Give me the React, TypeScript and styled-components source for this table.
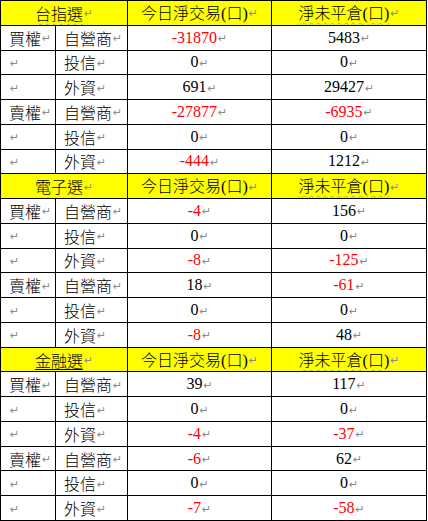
import React from 'react';
import styled, { createGlobalStyle, css } from 'styled-components';

type TRow = {
  side?: string;
  who: string;
  trade: number;
  open: number;
};

type TSection = {
  title: string;
  titleLine: 'wavy' | 'solid' | 'none';
  rows: TRow[];
};

const sections: TSection[] = [
  {
    title: '台指選',
    titleLine: 'wavy',
    rows: [
      { side: '買權', who: '自營商', trade: -31870, open: 5483 },
      { who: '投信', trade: 0, open: 0 },
      { who: '外資', trade: 691, open: 29427 },
      { side: '賣權', who: '自營商', trade: -27877, open: -6935 },
      { who: '投信', trade: 0, open: 0 },
      { who: '外資', trade: -444, open: 1212 },
    ],
  },
  {
    title: '電子選',
    titleLine: 'none',
    rows: [
      { side: '買權', who: '自營商', trade: -4, open: 156 },
      { who: '投信', trade: 0, open: 0 },
      { who: '外資', trade: -8, open: -125 },
      { side: '賣權', who: '自營商', trade: 18, open: -61 },
      { who: '投信', trade: 0, open: 0 },
      { who: '外資', trade: -8, open: 48 },
    ],
  },
  {
    title: '金融選',
    titleLine: 'solid',
    rows: [
      { side: '買權', who: '自營商', trade: 39, open: 117 },
      { who: '投信', trade: 0, open: 0 },
      { who: '外資', trade: -4, open: -37 },
      { side: '賣權', who: '自營商', trade: -6, open: 62 },
      { who: '投信', trade: 0, open: 0 },
      { who: '外資', trade: -7, open: -58 },
    ],
  },
];

const GlobalStyle = createGlobalStyle`
  html, body {
    margin: 0;
    padding: 0;
    background: #ffffff;
  }
  body {
    font-family: "Liberation Serif", "Noto Sans CJK TC", serif;
    font-size: 16px;
    color: #000000;
  }
`;

const Sheet = styled.div`
  width: 427px;
  height: 521px;
  box-sizing: border-box;
  padding: 1px;
  background: #000000;
  display: flex;
  flex-direction: column;
  gap: 1px;
`;

const Block = styled.div`
  flex: 1;
  display: grid;
  grid-template-columns: 54px 71px 143px 154px;
  grid-template-rows: repeat(7, 1fr);
  gap: 1px;
`;

const Cell = styled.div<{ $head?: boolean; $align?: 'left' | 'center'; $span?: number }>`
  background: ${p => (p.$head ? '#ffff00' : '#ffffff')};
  display: flex;
  align-items: center;
  justify-content: ${p => (p.$align === 'left' ? 'flex-start' : 'center')};
  padding: ${p => (p.$align === 'left' ? '0 0 0 8px' : '0')};
  white-space: nowrap;
  line-height: 1;
  overflow: hidden;
  ${p =>
    p.$span &&
    css`
      grid-column: span ${p.$span};
    `}
`;

const Label = styled.span<{ $line?: 'wavy' | 'solid' | 'none' }>`
  font-family: "Noto Sans CJK TC", "Liberation Serif", sans-serif;
  font-size: 16px;
  font-weight: 300;
  ${p =>
    p.$line === 'wavy' &&
    css`
      text-decoration: underline wavy #8bc34a;
      text-decoration-thickness: 1px;
      text-underline-offset: 3px;
    `}
  ${p =>
    p.$line === 'solid' &&
    css`
      text-decoration: underline solid #000000;
      text-decoration-thickness: 1px;
      text-underline-offset: 2px;
    `}
`;

const Num = styled.span<{ $neg?: boolean }>`
  font-family: "Liberation Serif", serif;
  font-size: 16px;
  color: ${p => (p.$neg ? '#ff0000' : '#000000')};
`;

const Mark = styled.span`
  font-family: "DejaVu Sans", sans-serif;
  font-size: 11px;
  color: #8a8a8a;
  margin-left: 1px;
  position: relative;
  top: 1px;
`;

const Unit = styled.span`
  font-family: "Liberation Serif", "Noto Sans CJK TC", serif;
  font-weight: 400;
`;

const Ret = () => <Mark>↵</Mark>;

const Value = ({ n }: { n: number }) => (
  <>
    <Num $neg={n < 0}>{n}</Num>
    <Ret />
  </>
);

export default function App() {
  return (
    <>
      <GlobalStyle />
      <Sheet>
        {sections.map(({ title, titleLine, rows }) => (
          <Block key={title}>
            <Cell $head $span={2}>
              <Label $line={titleLine}>{title}</Label>
              <Ret />
            </Cell>
            <Cell $head>
              <Label>
                今日淨交易<Unit>(</Unit>口<Unit>)</Unit>
              </Label>
              <Ret />
            </Cell>
            <Cell $head>
              <Label $line="wavy">
                淨未平倉<Unit>(</Unit>口<Unit>)</Unit>
              </Label>
              <Ret />
            </Cell>
            {rows.map((r, i) => (
              <React.Fragment key={i}>
                <Cell $align="left">
                  {r.side && <Label>{r.side}</Label>}
                  <Ret />
                </Cell>
                <Cell $align="left">
                  <Label>{r.who}</Label>
                  <Ret />
                </Cell>
                <Cell>
                  <Value n={r.trade} />
                </Cell>
                <Cell>
                  <Value n={r.open} />
                </Cell>
              </React.Fragment>
            ))}
          </Block>
        ))}
      </Sheet>
    </>
  );
}
